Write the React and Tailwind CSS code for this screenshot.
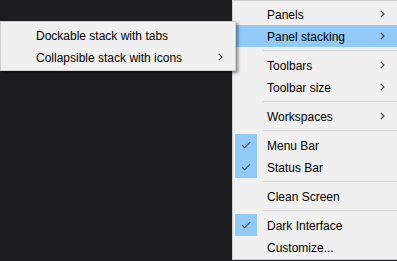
import React from 'react';

const mainItems = [
  { label: 'Panels', arrow: true },
  { label: 'Panel stacking', arrow: true, active: true },
  { sep: true },
  { label: 'Toolbars', arrow: true },
  { label: 'Toolbar size', arrow: true },
  { sep: true },
  { label: 'Workspaces', arrow: true },
  { sep: true },
  { label: 'Menu Bar', checked: true },
  { label: 'Status Bar', checked: true },
  { sep: true },
  { label: 'Clean Screen' },
  { sep: true },
  { label: 'Dark Interface', checked: true },
  { label: 'Customize...' },
];

const subItems = [
  { label: 'Dockable stack with tabs' },
  { label: 'Collapsible stack with icons', arrow: true },
];

const Chevron = () => (
  <svg width="5" height="8" viewBox="0 0 5 8" className="shrink-0">
    <path d="M0.8 0.8 L4 4 L0.8 7.2" fill="none" stroke="#3c3c3c" strokeWidth="1.2" />
  </svg>
);

const Check = () => (
  <svg width="10" height="8" viewBox="0 0 10 8">
    <path d="M1 4 L3.8 6.8 L9 1.2" fill="none" stroke="#4a4a4a" strokeWidth="1.1" />
  </svg>
);

const MainMenu = () => (
  <div className="absolute left-[232px] top-0 w-[166px] bg-[#f0f0f0] border border-[#cfcfcf] pt-[2px] pb-px pl-[2px]">
    {mainItems.map((item, i) =>
      item.sep ? (
        <div key={i} className="h-[7px] flex items-center pl-[28px]">
          <div className="h-px w-full bg-[#d7d7d7]" />
        </div>
      ) : (
        <div
          key={i}
          className={`h-[22px] flex items-center ${item.active ? 'bg-[#91c9f7]' : ''}`}
        >
          <div className={`w-[22px] h-[22px] flex items-center justify-center ${item.checked ? 'bg-[#91c9f7]' : ''}`}>
            {item.checked && <Check />}
          </div>
          <span className="ml-[10px] flex-1 pt-[2px]">{item.label}</span>
          <div className="w-[5px] mr-[12px]">{item.arrow && <Chevron />}</div>
        </div>
      )
    )}
  </div>
);

const SubMenu = () => (
  <div className="absolute left-0 top-[21px] w-[236px] bg-[#f0f0f0] border border-[#cfcfcf] py-[2px] pl-[2px] shadow-[2px_2px_3px_rgba(0,0,0,0.45)]">
    {subItems.map((item, i) => (
      <div key={i} className="h-[22px] flex items-center">
        <span className="ml-[33px] flex-1 pt-[2px]">{item.label}</span>
        <div className="w-[5px] mr-[12px]">{item.arrow && <Chevron />}</div>
      </div>
    ))}
  </div>
);

export default function App() {
  return (
    <div className="relative w-[397px] h-[261px] overflow-hidden bg-[#1c1d20] text-[12px] text-black font-['Liberation_Sans',Arial,sans-serif]">
      <MainMenu />
      <SubMenu />
    </div>
  );
}
